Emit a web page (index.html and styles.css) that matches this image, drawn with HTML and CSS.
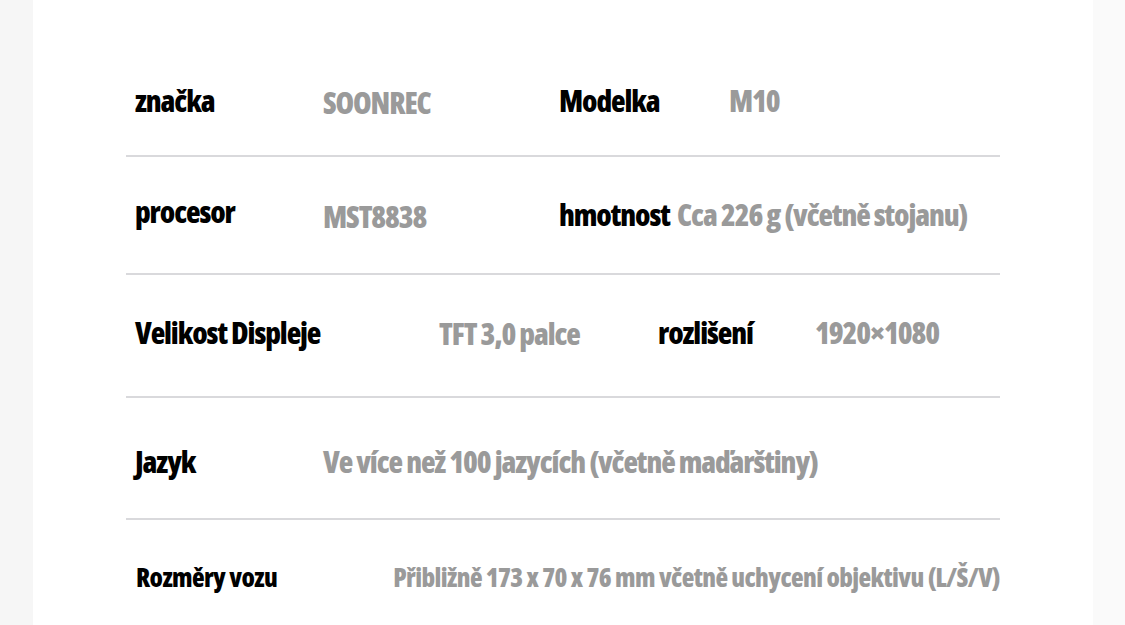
FILE: index.html
```html
<!DOCTYPE html>
<html lang="cs">
<head>
<meta charset="utf-8">
<link rel="stylesheet" href="styles.css">
</head>
<body>
<div class="page">
  <div class="panel">
    <div class="specs">
      <div class="row r1">
        <div class="cell lab w188">značka</div>
        <div class="cell val w236 dn2">SOONREC</div>
        <div class="cell lab w170">Modelka</div>
        <div class="cell val">M10</div>
      </div>
      <div class="row r2">
        <div class="cell lab w188 up3">procesor</div>
        <div class="cell val w236 dn2">MST8838</div>
        <div class="cell lab w118">hmotnost</div>
        <div class="cell val">Cca 226 g (včetně stojanu)</div>
      </div>
      <div class="row r3">
        <div class="cell lab w304">Velikost Displeje</div>
        <div class="cell val w219 dn1">TFT 3,0 palce</div>
        <div class="cell lab w157">rozlišení</div>
        <div class="cell val">1920×1080</div>
      </div>
      <div class="row r4">
        <div class="cell lab w188">Jazyk</div>
        <div class="cell val">Ve více než 100 jazycích (včetně maďarštiny)</div>
      </div>
      <div class="row r5">
        <div class="cell lab small w262">Rozměry vozu</div>
        <div class="cell val small">Přibližně 173 x 70 x 76 mm včetně uchycení objektivu (L/Š/V)</div>
      </div>
    </div>
  </div>
</div>
</body>
</html>
```
FILE: styles.css
```css
html, body {
  margin: 0;
  padding: 0;
}
body {
  background: #f9f9f9;
  font-family: "Open Sans", "Roboto", sans-serif;
}
.page {
  display: flex;
  height: 625px;
  overflow: hidden;
  padding-left: 33px;
  padding-right: 32px;
  background: linear-gradient(90deg, #f6f6f6 0, #f6f6f6 33px, #fafafa 33px);
}
.panel {
  flex: 1;
  background: #ffffff;
  padding: 38px 0 0 93px;
}
.specs {
  width: 874px;
  display: flex;
  flex-direction: column;
}
.row {
  display: flex;
  align-items: center;
  padding-left: 9px;
  border-bottom: 2px solid #d9d9dc;
  box-sizing: border-box;
}
.r1 { height: 119px; padding-top: 8px; }
.r2 { height: 118px; }
.r3 { height: 123px; padding-bottom: 5px; }
.r4 { height: 122px; padding-top: 8px; }
.r5 { height: 120px; border-bottom: none; padding-left: 10px; padding-bottom: 6px; }
.cell {
  font-size: 30px;
  font-weight: 800;
  font-stretch: 75%;
  line-height: 1;
  white-space: nowrap;
  letter-spacing: -1.1px;
}
.cell.small {
  font-size: 26px;
  letter-spacing: -0.6px;
}
.lab { color: #000000; }
.val { color: #9a9a9a; }
.w188 { width: 188px; }
.w236 { width: 236px; }
.w170 { width: 170px; }
.w118 { width: 118px; }
.w304 { width: 304px; }
.w219 { width: 219px; }
.w157 { width: 157px; }
.w262 { width: 262px; }
.dn1 { position: relative; top: 1px; }
.dn2 { position: relative; top: 2px; }
.up3 { position: relative; top: -3px; }
```
